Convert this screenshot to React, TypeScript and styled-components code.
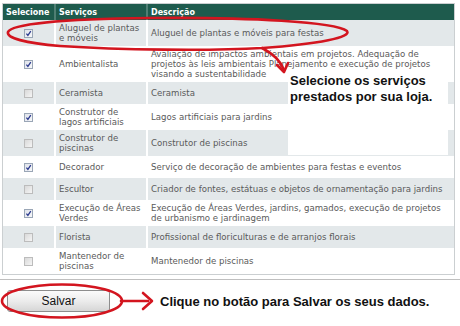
import React from "react";
import styled, { createGlobalStyle } from "styled-components";

const Global = createGlobalStyle`
  html, body { margin: 0; padding: 0; background: #ffffff; }
  body { font-family: "DejaVu Sans", Verdana, sans-serif; }
`;

const Page = styled.div`
  position: relative;
  width: 460px;
  height: 326px;
  overflow: hidden;
  background: #ffffff;
`;

const TableArea = styled.div`
  padding: 3px 0 0 2px;
`;

const Frame = styled.div`
  width: 451px;
  border: 1px solid #cbcfd1;
`;

const Grid = styled.table`
  width: 100%;
  border-collapse: collapse;
  table-layout: fixed;
  font-family: "DejaVu Sans", Verdana, sans-serif;
`;

const HeadCell = styled.th<{ $first?: boolean }>`
  height: 16px;
  padding: 0 3px;
  background: #1e5b4d;
  color: #ffffff;
  font-size: 8px;
  font-weight: bold;
  text-align: left;
  vertical-align: middle;
  border-left: ${(p) => (p.$first ? "none" : "2px solid rgba(255,255,255,0.22)")};
`;

const Row = styled.tr<{ $shaded: boolean }>`
  background: ${(p) => (p.$shaded ? "#e3e8ea" : "#ffffff")};
`;

const Cell = styled.td<{ $first?: boolean }>`
  height: 16px;
  padding: 3px 3px;
  font-size: 8.6px;
  line-height: 10px;
  color: #5a5a5a;
  vertical-align: middle;
  text-align: ${(p) => (p.$first ? "center" : "left")};
  border-left: ${(p) => (p.$first ? "none" : "2px solid #ffffff")};
`;

const Wrap = styled.div<{ $w: number }>`
  width: ${(p) => p.$w}px;
`;

const Box = styled.span<{ $checked: boolean }>`
  display: inline-flex;
  align-items: center;
  justify-content: center;
  width: 9px;
  height: 9px;
  box-sizing: border-box;
  border: 1px solid ${(p) => (p.$checked ? "#9aa6b6" : "#bcbcbc")};
  background: ${(p) =>
    p.$checked
      ? "linear-gradient(135deg, #dfe3ea 0%, #f7f8fa 100%)"
      : "linear-gradient(135deg, #d9d9d9 0%, #f5f5f5 100%)"};
  vertical-align: middle;
`;

const Divider = styled.div`
  margin-top: 4px;
  height: 0;
  border-top: 1px solid #bfbfbf;
`;

const Footer = styled.div`
  display: flex;
  align-items: center;
  gap: 50px;
  padding: 10px 0 0 7px;
`;

const SaveButton = styled.button`
  width: 103px;
  height: 22px;
  padding: 0;
  border: 1px solid #8d8d8d;
  border-radius: 3px;
  background: linear-gradient(#fbfbfb 0%, #ececec 50%, #d6d6d6 100%);
  font-family: "Liberation Sans", Arial, sans-serif;
  font-size: 12px;
  color: #111111;
`;

const Hint = styled.span`
  font-family: "Liberation Sans", Arial, sans-serif;
  font-size: 13px;
  font-weight: bold;
  color: #111111;
`;

const Callout = styled.div`
  position: absolute;
  left: 288px;
  top: 73px;
  width: 158px;
  height: 82px;
  padding: 0 0 0 2px;
  background: #ffffff;
  font-family: "Liberation Sans", Arial, sans-serif;
  font-size: 13px;
  font-weight: bold;
  line-height: 16px;
  color: #111111;
`;

const Marks = styled.svg`
  position: absolute;
  left: 0;
  top: 0;
  pointer-events: none;
`;

type Service = { checked: boolean; name: string; desc: string };

const services: Service[] = [
  { checked: true, name: "Aluguel de plantas e móveis", desc: "Aluguel de plantas e móveis para festas" },
  {
    checked: true,
    name: "Ambientalista",
    desc: "Avaliação de impactos ambientais em projetos. Adequação de projetos às leis ambientais Planejamento e execução de projetos visando a sustentabilidade",
  },
  { checked: false, name: "Ceramista", desc: "Ceramista" },
  { checked: true, name: "Construtor de lagos artificiais", desc: "Lagos artificiais para jardins" },
  { checked: false, name: "Construtor de piscinas", desc: "Construtor de piscinas" },
  { checked: true, name: "Decorador", desc: "Serviço de decoração de ambientes para festas e eventos" },
  { checked: false, name: "Escultor", desc: "Criador de fontes, estátuas e objetos de ornamentação para jardins" },
  {
    checked: true,
    name: "Execução de Áreas Verdes",
    desc: "Execução de Áreas Verdes, jardins, gamados, execução de projetos de urbanismo e jardinagem",
  },
  { checked: false, name: "Florista", desc: "Profissional de floriculturas e de arranjos florais" },
  { checked: false, name: "Mantenedor de piscinas", desc: "Mantenedor de piscinas" },
];

function CheckBox({ checked }: { checked: boolean }) {
  return (
    <Box $checked={checked}>
      {checked && (
        <svg width="7" height="7" viewBox="0 0 7 7">
          <path d="M1.4 3.6 L2.9 5.4 L5.8 1.2" fill="none" stroke="#2c3a8e" strokeWidth="1.3" />
        </svg>
      )}
    </Box>
  );
}

export default function App() {
  const red = "#d3151f";
  return (
    <Page>
      <Global />
      <TableArea>
        <Frame>
          <Grid>
            <colgroup>
              <col style={{ width: 52 }} />
              <col style={{ width: 92 }} />
              <col />
            </colgroup>
            <thead>
              <tr>
                <HeadCell $first>Selecione</HeadCell>
                <HeadCell>Serviços</HeadCell>
                <HeadCell>Descrição</HeadCell>
              </tr>
            </thead>
            <tbody>
              {services.map((s, i) => (
                <Row key={s.name} $shaded={i % 2 === 0}>
                  <Cell $first>
                    <CheckBox checked={s.checked} />
                  </Cell>
                  <Cell>
                    <Wrap $w={83}>{s.name}</Wrap>
                  </Cell>
                  <Cell>
                    <Wrap $w={298}>{s.desc}</Wrap>
                  </Cell>
                </Row>
              ))}
            </tbody>
          </Grid>
        </Frame>
      </TableArea>
      <Divider />
      <Footer>
        <SaveButton type="button">Salvar</SaveButton>
        <Hint>Clique no botão para Salvar os seus dados.</Hint>
      </Footer>
      <Callout>
        Selecione os serviços
        <br />
        prestados por sua loja.
      </Callout>
      <Marks width="460" height="326" viewBox="0 0 460 326">
        <g fill="none" stroke={red} strokeWidth="2.6" strokeLinecap="round" strokeLinejoin="round">
          <path d="M262 48 C210 51 120 50 60 46 C25 43 6 38 8 32 C11 24 60 19 150 18 C250 17 335 22 347 31 C352 37 320 44 262 48" />
          <path d="M262 48 C272 53 280 60 284 70" />
          <path d="M277 65 L284 72 L288 63" />
          <ellipse cx="62" cy="301" rx="60" ry="16.5" />
          <path d="M121 301 L148 301" />
          <path d="M143 293 L152 301 L143 309" />
        </g>
      </Marks>
    </Page>
  );
}
